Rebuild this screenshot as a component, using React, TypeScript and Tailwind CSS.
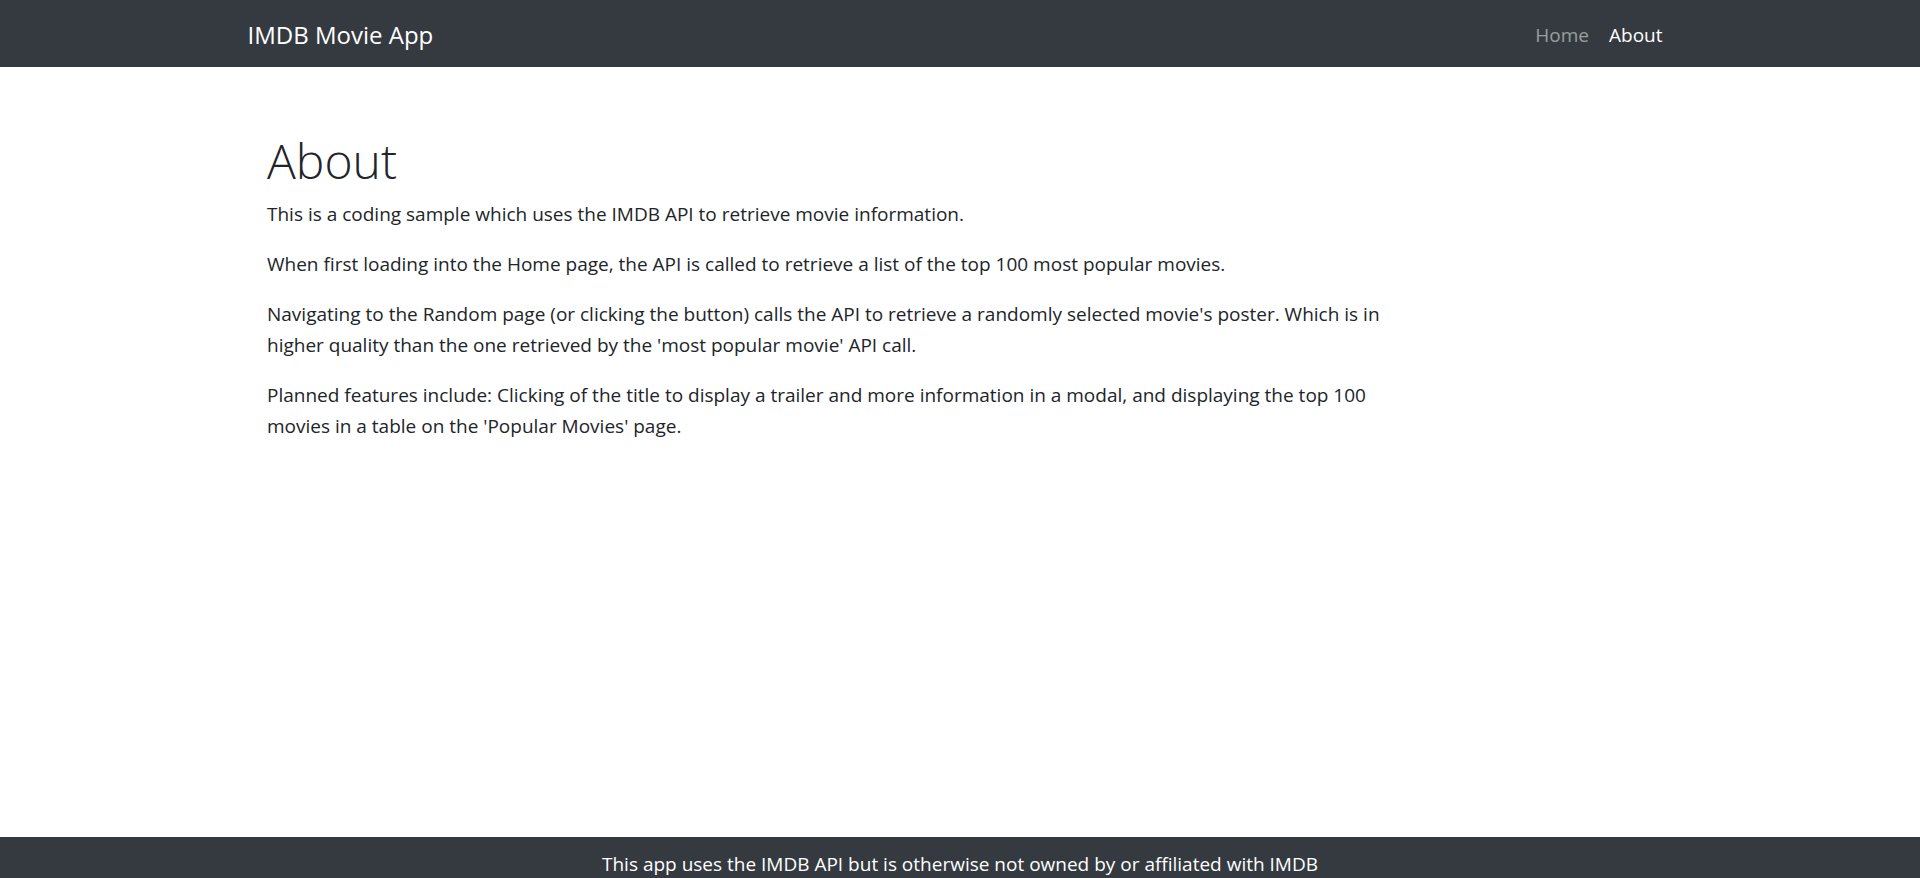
export default function App() {
  const navLinks = [
    { href: '#', label: 'Home', active: false },
    { href: '#', label: 'About', active: true },
  ]

  const paragraphs = [
    'This is a coding sample which uses the IMDB API to retrieve movie information.',
    'When first loading into the Home page, the API is called to retrieve a list of the top 100 most popular movies.',
    "Navigating to the Random page (or clicking the button) calls the API to retrieve a randomly selected movie's poster. Which is in higher quality than the one retrieved by the 'most popular movie' API call.",
    "Planned features include: Clicking of the title to display a trailer and more information in a modal, and displaying the top 100 movies in a table on the 'Popular Movies' page.",
  ]

  return (
    <div className="h-screen overflow-hidden flex flex-col bg-white font-['Open_Sans',sans-serif] text-[#212529]">
      <header className="h-[67px] shrink-0 bg-[#343a40]">
        <div className="w-[1425px] h-full mx-auto flex items-center justify-between">
          <a href="#" className="text-[24px] leading-[37px] pt-[2px] text-white">
            IMDB Movie App
          </a>
          <nav className="flex items-center pt-[2px]">
            {navLinks.map((link) => (
              <a
                key={link.label}
                href={link.href}
                className={`px-[10px] text-[19px] leading-[30px] ${
                  link.active ? 'text-white' : 'text-white/50'
                }`}
              >
                {link.label}
              </a>
            ))}
          </nav>
        </div>
      </header>

      <main className="flex-1">
        <div className="w-[1425px] mx-auto pt-[65px] pl-[19.5px]">
          <div className="w-[1140px]">
            <h1 className="text-[48px] leading-[58px] font-light mb-[9px]">About</h1>
            {paragraphs.map((text, i) => (
              <p key={i} className="text-[19px] leading-[30.6px] mb-[19.6px]">
                {text}
              </p>
            ))}
          </div>
        </div>
      </main>

      <footer className="h-[41px] shrink-0 bg-[#343a40] pt-[12px] text-center text-white text-[19px] leading-[30px]">
        This app uses the IMDB API but is otherwise not owned by or affiliated with IMDB
      </footer>
    </div>
  )
}
